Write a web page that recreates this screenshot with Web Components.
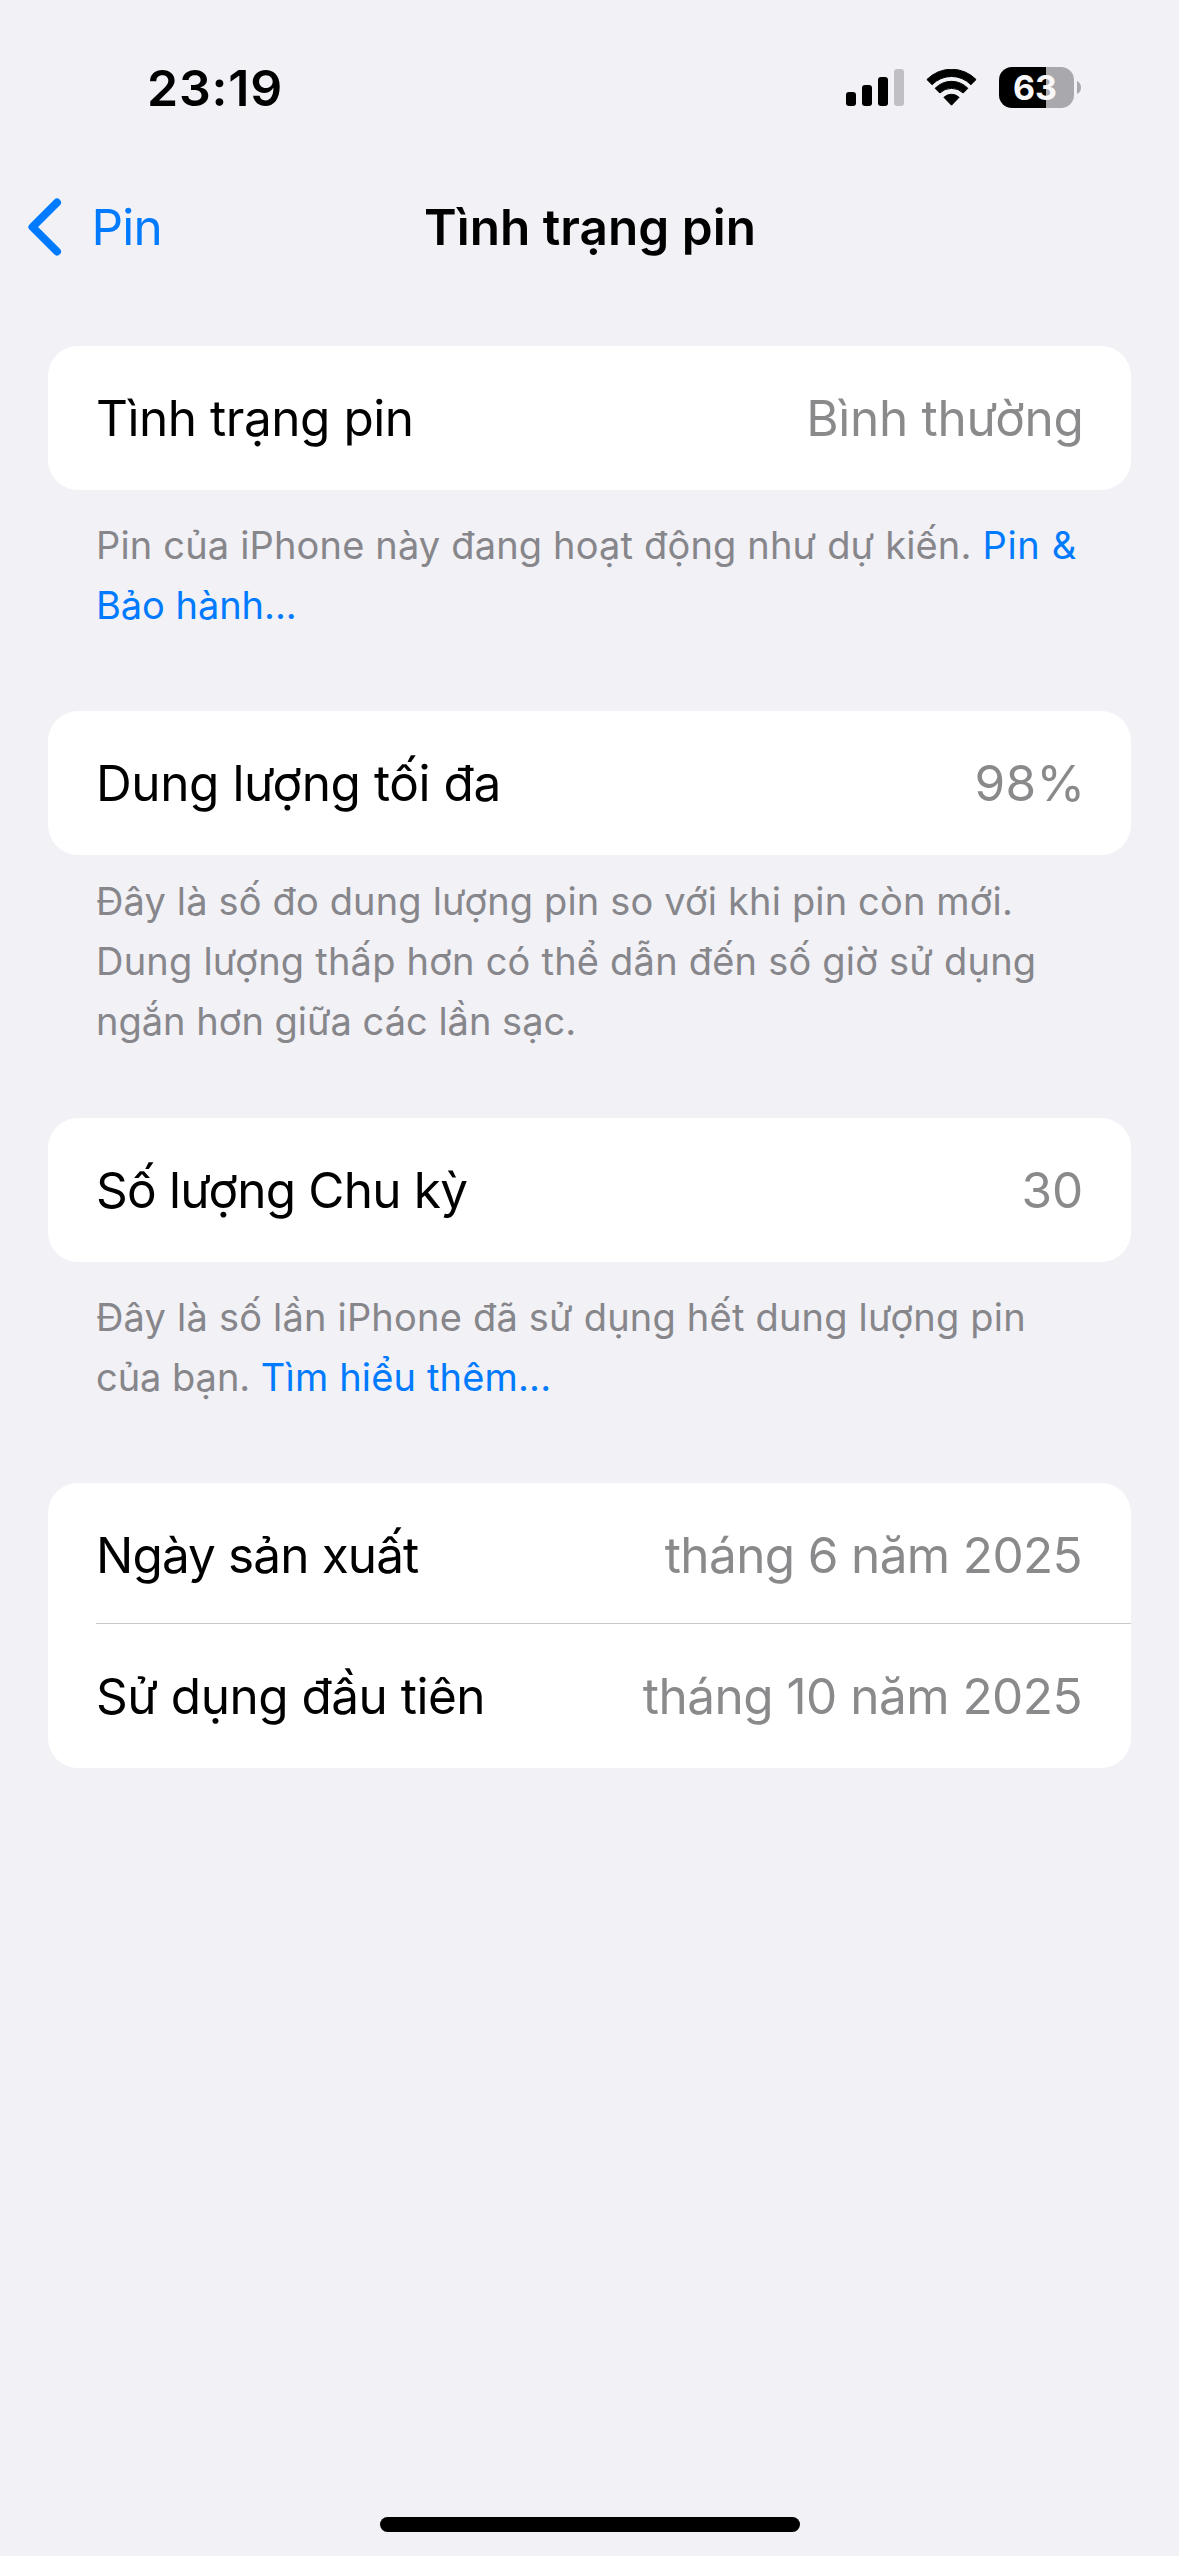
<!DOCTYPE html>
<html lang="vi">
<head>
<meta charset="utf-8">
<title>Tình trạng pin</title>
<style>
html,body{margin:0;padding:0;background:#f1f1f6}
body{font-family:Inter,"Noto Sans",sans-serif;color:#000}
</style>
</head>
<body>
<script>
const define = (name, html) => {
  const tpl = document.createElement('template');
  tpl.innerHTML = html;
  customElements.define(name, class extends HTMLElement {
    constructor() {
      super();
      this.attachShadow({ mode: 'open' }).append(tpl.content.cloneNode(true));
    }
  });
};

define('phone-screen', `<style>
:host{display:flex;flex-direction:column;width:1179px;height:2556px;background:#f1f1f6;overflow:hidden}
main{flex:1;padding:67px 48px 0;display:flex;flex-direction:column}
</style><slot name="top"></slot><main><slot></slot></main><slot name="bottom"></slot>`);

define('signal-icon', `<style>:host{display:block;width:58px;height:37px}svg{display:block}</style>
<svg width="58" height="37" viewBox="0 0 58 37">
<rect x="0" y="23" width="10" height="14" rx="3"/><rect x="16" y="16" width="10" height="21" rx="3"/>
<rect x="32" y="8" width="10" height="29" rx="3"/><rect x="48" y="0" width="10" height="37" rx="3" fill="#bfbfc4"/></svg>`);

define('wifi-icon', `<style>:host{display:block;width:51px;height:37px}svg{display:block}</style>
<svg width="51" height="37" viewBox="0 0 51 37" stroke="#000" stroke-width="1" stroke-linejoin="round">
<path d="M.9 10.5A34.6 34.6 0 0 1 50.1 10.5L44.9 15.7A27 27 0 0 0 6.1 15.7Z"/>
<path d="M9.1 19.3A22.8 22.8 0 0 1 41.9 19.3L37.2 24A17 17 0 0 0 13.8 24Z"/>
<path d="M17.9 28.3A11 11 0 0 1 33.1 28.3L25.5 36.2Z"/></svg>`);

define('battery-icon', `<style>
:host{display:flex;align-items:center;gap:3px;height:41px}
.body{width:75px;height:41px;border-radius:13px;background:linear-gradient(90deg,#000 47px,#a9a9ad 47px);color:#f8f8fb;
display:flex;justify-content:center;font-size:34px;font-weight:700;line-height:41px;box-sizing:border-box;padding-right:3px}
svg{display:block}
</style><div class="body"><slot></slot></div>
<svg width="4" height="13" viewBox="0 0 4 13"><path d="M0 0C2.4 1 4 3.500 4 6.500S2.400 12 0 13Z" fill="#a9a9ad"/></svg>`);

define('status-bar', `<style>
:host{display:flex;justify-content:space-between;align-items:center;height:175px;box-sizing:border-box;padding:0 98px 0 147px}
time{font-size:50px;font-weight:600;line-height:60px;letter-spacing:.81px;display:block}
.icons{display:flex;align-items:center}
wifi-icon{margin-left:22px;margin-right:22px}
</style><time>23:19</time><div class="icons"><signal-icon></signal-icon><wifi-icon></wifi-icon><battery-icon>63</battery-icon></div>`);

define('nav-bar', `<style>
:host{display:grid;grid-template-columns:1fr auto 1fr;align-items:center;height:104px;line-height:60px;font-size:49.5px}
.back{display:flex;align-items:center;gap:30px;padding-left:27.500px;color:#007aff;letter-spacing:-.8px}
svg{display:block}
.title{font-weight:600;letter-spacing:.02px;padding-left:1px}
</style><div class="back"><svg width="34" height="58" viewBox="0 0 34 58" fill="none" stroke="#007aff" stroke-width="8" stroke-linecap="round" stroke-linejoin="round"><path d="M29 4.500L4.500 29L29 53.500"/></svg><slot name="back"></slot></div><div class="title"><slot></slot></div>`);

define('settings-card', `<style>
:host{display:block;background:#fff;border-radius:30px;overflow:hidden;flex:none}
</style><slot></slot>`);

define('settings-row', `<style>
:host{display:flex;justify-content:space-between;height:144px;line-height:144px;padding:0 48px;font-size:49.5px;white-space:nowrap}
:host([divided]){height:140px}
.label{letter-spacing:var(--label-track,0)}
.value{color:#8a8a8c;letter-spacing:var(--value-track,0);margin-right:var(--value-shift,0)}
</style><span class="label"><slot></slot></span><span class="value"><slot name="value"></slot></span>`);

define('row-divider', `<style>:host{display:block;height:1px;margin-left:48px;background:#c8c8ca}</style>`);

define('section-note', `<style>
:host{display:block;flex:none;padding:25px 48px 76px;font-size:38px;line-height:60px;color:#86868b}
:host([tight]){padding:16px 48px 67px}
</style><slot></slot>`);

define('note-line', `<style>
:host{display:block;white-space:nowrap;letter-spacing:var(--track,0)}
</style><slot></slot>`);

define('text-link', `<style>:host{display:inline;color:#007aff;letter-spacing:var(--track,0)}</style><slot></slot>`);

define('home-indicator', `<style>:host{display:block;width:420px;height:15px;border-radius:8px;background:#000;margin:0 379px 24px 380px}</style>`);
</script>
<phone-screen>
  <status-bar slot="top"></status-bar>
  <nav-bar slot="top"><span slot="back">Pin</span>Tình trạng pin</nav-bar>

  <settings-card><settings-row style="--label-track:-.46px;--value-track:-.28px;--value-shift:-.5px">Tình trạng pin<span slot="value">Bình thường</span></settings-row></settings-card>
  <section-note>
    <note-line style="--track:.165px">Pin của iPhone này đang hoạt động như dự kiến. <text-link style="--track:.7px">Pin &amp;</text-link></note-line>
    <note-line><text-link style="--track:-.05px">Bảo hành...</text-link></note-line>
  </section-note>

  <settings-card><settings-row style="--label-track:-.42px;--value-track:.39px;--value-shift:-2.500px">Dung lượng tối đa<span slot="value">98%</span></settings-row></settings-card>
  <section-note tight>
    <note-line style="--track:.15px">Đây là số đo dung lượng pin so với khi pin còn mới.</note-line>
    <note-line style="--track:.215px">Dung lượng thấp hơn có thể dẫn đến số giờ sử dụng</note-line>
    <note-line>ngắn hơn giữa các lần sạc.</note-line>
  </section-note>

  <settings-card><settings-row style="--label-track:-.78px;--value-track:-.17px">Số lượng Chu kỳ<span slot="value">30</span></settings-row></settings-card>
  <section-note>
    <note-line style="--track:.2px">Đây là số lần iPhone đã sử dụng hết dung lượng pin</note-line>
    <note-line style="--track:-.05px">của bạn. <text-link style="--track:.165px">Tìm hiểu thêm...</text-link></note-line>
  </section-note>

  <settings-card>
    <settings-row divided style="--label-track:-.88px;--value-track:-.64px;--value-shift:1px">Ngày sản xuất<span slot="value">tháng 6 năm 2025</span></settings-row>
    <row-divider></row-divider>
    <settings-row style="--label-track:-.5px;--value-track:-.525px;--value-shift:1px">Sử dụng đầu tiên<span slot="value">tháng 10 năm 2025</span></settings-row>
  </settings-card>
  <home-indicator slot="bottom"></home-indicator>
</phone-screen>
</body>
</html>
